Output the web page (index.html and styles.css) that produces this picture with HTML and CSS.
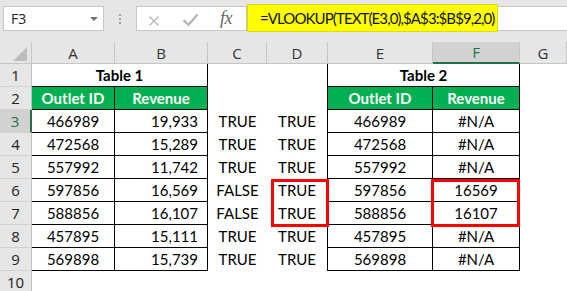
FILE: index.html
```html
<!DOCTYPE html>
<html>
<head>
<meta charset="utf-8">
<link rel="stylesheet" href="styles.css">
</head>
<body>
<div class="app">
  <div class="fbar">
    <div class="namebox"><span>F3</span><svg class="caret" width="8" height="4" viewBox="0 0 8 4"><polygon points="0,0 8,0 4,4" fill="#707070"/></svg></div>
    <div class="grip"><i></i><i></i><i></i></div>
    <div class="fxbox">
      <svg class="fxicons" width="70" height="23" viewBox="0 0 70 23">
        <path d="M12.5 9.5 L21.5 18.5 M21.5 9.5 L12.5 18.5" stroke="#b4b4b4" stroke-width="1.4" fill="none"/>
        <path d="M46.5 13 L51.5 18 L60.5 7.5" stroke="#b4b4b4" stroke-width="2.2" fill="none"/>
      </svg>
      <span class="fx">fx</span>
    </div>
    <div class="finput"><span class="hl">=VLOOKUP(TEXT(E3,0),$A$3:$B$9,2,0)</span></div>
  </div>

  <div class="sheet">
    <div class="ch corner"><svg width="32" height="21" viewBox="0 0 32 21"><polygon points="27,5 27,19 13,19" fill="#bdbdbd"/></svg></div>
    <div class="ch">A</div><div class="ch">B</div><div class="ch">C</div><div class="ch">D</div><div class="ch">E</div><div class="ch sel">F</div><div class="ch">G</div>

    <div class="rh">1</div>
    <div class="c t span2 b">Table 1</div>
    <div class="c"></div><div class="c edge"></div>
    <div class="c t span2 b">Table 2</div>
    <div class="c"></div>

    <div class="rh">2</div>
    <div class="c t g">Outlet ID</div><div class="c t g">Revenue</div>
    <div class="c"></div><div class="c edge"></div>
    <div class="c t g">Outlet ID</div><div class="c t g">Revenue</div>
    <div class="c"></div>

    <div class="rh rsel">3</div>
    <div class="c t">466989</div><div class="c t r">19,933</div>
    <div class="c">TRUE</div><div class="c edge">TRUE</div>
    <div class="c t">466989</div><div class="c t">#N/A</div>
    <div class="c"></div>

    <div class="rh">4</div>
    <div class="c t">472568</div><div class="c t r">15,289</div>
    <div class="c">TRUE</div><div class="c edge">TRUE</div>
    <div class="c t">472568</div><div class="c t">#N/A</div>
    <div class="c"></div>

    <div class="rh">5</div>
    <div class="c t">557992</div><div class="c t r">11,742</div>
    <div class="c">TRUE</div><div class="c edge">TRUE</div>
    <div class="c t">557992</div><div class="c t">#N/A</div>
    <div class="c"></div>

    <div class="rh">6</div>
    <div class="c t">597856</div><div class="c t r">16,569</div>
    <div class="c">FALSE</div><div class="c edge">TRUE</div>
    <div class="c t">597856</div><div class="c t">16569</div>
    <div class="c"></div>

    <div class="rh">7</div>
    <div class="c t">588856</div><div class="c t r">16,107</div>
    <div class="c">FALSE</div><div class="c edge">TRUE</div>
    <div class="c t">588856</div><div class="c t">16107</div>
    <div class="c"></div>

    <div class="rh">8</div>
    <div class="c t">457895</div><div class="c t r">15,111</div>
    <div class="c">TRUE</div><div class="c edge">TRUE</div>
    <div class="c t">457895</div><div class="c t">#N/A</div>
    <div class="c"></div>

    <div class="rh">9</div>
    <div class="c t">569898</div><div class="c t r">15,739</div>
    <div class="c">TRUE</div><div class="c edge">TRUE</div>
    <div class="c t">569898</div><div class="c t">#N/A</div>
    <div class="c"></div>

    <div class="rh">10</div>
    <div class="c"></div><div class="c"></div><div class="c"></div><div class="c"></div><div class="c"></div><div class="c"></div><div class="c"></div>

    <div class="redbox box-d"></div>
    <div class="redbox box-f"></div>
  </div>
</div>
</body>
</html>
```

FILE: styles.css
```css
* { box-sizing: border-box; }
html, body { margin: 0; padding: 0; }
body { width: 567px; height: 291px; overflow: hidden; background: #fff; }
.app { width: 567px; font-family: Lato, "Liberation Sans", sans-serif; }

.fbar {
  height: 42px;
  background: #e6e6e6;
  display: flex;
  align-items: flex-start;
  padding-top: 6px;
}
.namebox {
  margin-left: 3px;
  width: 101px;
  height: 25px;
  background: #fff;
  border: 1px solid #c6c6c6;
  display: flex;
  align-items: center;
  justify-content: space-between;
  padding: 0 5px 0 7px;
  font-family: "Open Sans", sans-serif;
  font-size: 14px;
  color: #222;
}
.grip {
  width: 32px;
  height: 25px;
  display: flex;
  flex-direction: column;
  align-items: center;
  justify-content: center;
  gap: 2px;
}
.grip i { display: block; width: 2px; height: 2px; background: #a0a0a0; }
.fxbox {
  width: 111px;
  height: 25px;
  background: #fff;
  border: 1px solid #c6c6c6;
  display: flex;
  align-items: center;
}
.fxicons { display: block; }
.fx {
  margin-left: 13px;
  font-family: "Liberation Serif", serif;
  font-style: italic;
  font-size: 18px;
  color: #666;
  letter-spacing: -0.5px;
}
.finput {
  flex: 1;
  height: 25px;
  background: #fff;
  border-top: 1px solid #c6c6c6;
  border-bottom: 1px solid #c6c6c6;
  display: flex;
  align-items: flex-start;
}
.hl {
  display: flex;
  align-items: center;
  height: 28px;
  margin-top: -3px;
  width: 251px;
  background: #ffff00;
  border: 1px solid #dcdc00;
  padding-left: 12px;
  font-size: 15px;
  letter-spacing: -0.9px;
  color: #111;
  white-space: nowrap;
}

.sheet {
  position: relative;
  display: grid;
  grid-template-columns: 32px 83px 93px 59px 61px 105px 87px 47px;
  grid-template-rows: 22px repeat(10, 23px);
  font-size: 15px;
  color: #000;
}
.ch {
  background: #e6e6e6;
  border-right: 1px solid #c6c6c6;
  border-bottom: 1px solid #c6c6c6;
  display: flex;
  align-items: center;
  justify-content: center;
  font-family: "Open Sans", sans-serif;
  font-size: 15px;
  color: #333;
}
.ch.corner { display: block; }
.ch.corner svg { display: block; }
.ch.sel {
  background: #d2d2d2;
  color: #217346;
  border-bottom: 2px solid #217346;
}
.rh {
  background: #e6e6e6;
  border-right: 1px solid #c0c0c0;
  border-bottom: 1px solid #d2d2d2;
  text-align: center;
  font-family: "Open Sans", sans-serif;
  font-size: 15px;
  line-height: 22px;
  color: #222;
}
.rh.rsel {
  background: #d2d2d2;
  color: #217346;
  border-right: 2px solid #217346;
}
.c {
  text-align: center;
  line-height: 23px;
  white-space: nowrap;
}
.t {
  border-right: 1px solid #000;
  border-bottom: 1px solid #000;
}
.edge { border-right: 1px solid #000; }
.span2 { grid-column: span 2; }
.b { font-weight: bold; }
.g { background: #00b050; color: #fff; font-weight: bold; }
.r { text-align: right; padding-right: 9px; }

.redbox {
  position: absolute;
  border: 3px solid #ff0000;
  top: 137px;
  height: 48px;
}
.box-d { left: 271px; width: 58px; }
.box-f { left: 431px; width: 89px; }
```
